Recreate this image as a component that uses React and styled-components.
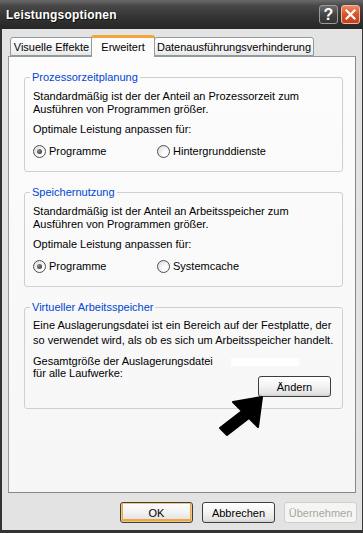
import styled, { createGlobalStyle } from "styled-components";

const GlobalStyle = createGlobalStyle`
  html, body {
    margin: 0;
    padding: 0;
    background: #ffffff;
  }
  body {
    font-family: "Liberation Sans", Arial, sans-serif;
    font-size: 11px;
    color: #000;
  }
`;

const Window = styled.div`
  position: relative;
  width: 363px;
  height: 533px;
  display: flex;
  flex-direction: column;
  overflow: hidden;
`;

const TitleBar = styled.div`
  height: 29px;
  flex: none;
  display: flex;
  align-items: center;
  padding: 0 3px 0 6px;
  gap: 3px;
  background: linear-gradient(#6a6a6a 0%, #474747 20%, #333 60%, #262626 100%);
`;

const Title = styled.div`
  flex: 1;
  color: #fff;
  font-weight: bold;
  font-size: 12px;
  letter-spacing: 0.2px;
  text-shadow: 1px 1px 0 #111;
  margin-top: 1px;
`;

const CaptionButton = styled.div`
  width: 19px;
  height: 19px;
  box-sizing: border-box;
  border: 1px solid ${({ $close }) => ($close ? "#f1b9a6" : "#9a9a9a")};
  border-radius: 3px;
  display: flex;
  align-items: center;
  justify-content: center;
  color: #fff;
  font-weight: bold;
  font-size: 16px;
  background: ${({ $close }) =>
    $close
      ? "linear-gradient(#f08a63, #dc5128 50%, #c93d19)"
      : "linear-gradient(#6c6c6c, #444 50%, #333)"};
`;

const Client = styled.div`
  flex: 1;
  display: flex;
  flex-direction: column;
  background: #e3e3e3;
  border-left: 2px solid #333;
  border-right: 1px solid #3a3a3a;
  border-bottom: 3px solid #333;
  padding: 8px 6px 7px 6px;
`;

const TabStrip = styled.div`
  height: 19px;
  display: flex;
  align-items: flex-end;
  padding-left: 2px;
  position: relative;
  z-index: 1;
`;

const Tab = styled.div`
  box-sizing: border-box;
  height: ${({ $active }) => ($active ? "22px" : "19px")};
  margin-bottom: ${({ $active }) => ($active ? "-1px" : "0")};
  margin-left: ${({ $active }) => ($active ? "-2px" : "0")};
  margin-right: ${({ $active }) => ($active ? "-1px" : "0")};
  width: ${({ $w }) => $w}px;
  border: 1px solid #919b9c;
  border-bottom: ${({ $active }) => ($active ? "none" : "1px solid #919b9c")};
  border-top: ${({ $active }) => ($active ? "3px solid #f1a637" : "1px solid #919b9c")};
  border-radius: 3px 3px 0 0;
  background: ${({ $active }) =>
    $active ? "#fcfcfc" : "linear-gradient(#ffffff, #f3f3f3 70%, #e6e6e6)"};
  display: flex;
  align-items: center;
  justify-content: center;
  white-space: nowrap;
  padding-bottom: ${({ $active }) => ($active ? "2px" : "0")};
  z-index: ${({ $active }) => ($active ? 2 : 1)};
`;

const Panel = styled.div`
  height: 437px;
  box-sizing: border-box;
  border: 1px solid #919b9c;
  border-right-color: #888;
  border-bottom-color: #888;
  background: linear-gradient(#fcfcfc, #f6f6f6);
  padding: 14px 12px 0 15px;
  display: flex;
  flex-direction: column;
  gap: 14px;
`;

const Group = styled.fieldset`
  margin: 0;
  min-width: 0;
  border: 1px solid #d0d0cb;
  border-radius: 3px;
  padding: ${({ $pad }) => $pad || "6px 8px 13px 8px"};
`;

const Legend = styled.legend`
  color: #0046d5;
  line-height: 13px;
  padding: 0 2px;
  margin-left: -3px;
`;

const Line = styled.div`
  line-height: ${({ $lh }) => $lh || 13}px;
  white-space: nowrap;
`;

const Lines = styled.div`
  margin-bottom: ${({ $mb }) => $mb || 0}px;
`;

const RadioRow = styled.div`
  margin-top: 9px;
  display: grid;
  grid-template-columns: 124px auto;
  align-items: center;
`;

const RadioItem = styled.label`
  display: flex;
  align-items: center;
  gap: 3px;
  line-height: 13px;
`;

const RadioCircle = styled.span`
  width: 13px;
  height: 13px;
  box-sizing: border-box;
  border-radius: 50%;
  border: 1px solid #4f4f4f;
  background: radial-gradient(circle at 70% 70%, #ffffff 20%, #dcdcdc 90%);
  display: flex;
  align-items: center;
  justify-content: center;

  &::after {
    content: "";
    width: 5px;
    height: 5px;
    border-radius: 50%;
    background: ${({ $checked }) =>
      $checked ? "radial-gradient(circle at 35% 35%, #8a8a8a, #2a2a2a)" : "transparent"};
  }
`;

const SizeRow = styled.div`
  margin-top: 7px;
  display: flex;
  align-items: flex-start;
`;

const Redacted = styled.div`
  width: 68px;
  height: 8px;
  margin: 3px 0 0 18px;
  background: #ffffff;
`;

const ButtonRight = styled.div`
  display: flex;
  justify-content: flex-end;
  margin-top: -3px;
  padding-right: 3px;
`;

const Button = styled.button`
  width: 73px;
  height: 21px;
  box-sizing: border-box;
  padding: 0;
  font-family: "Liberation Sans", Arial, sans-serif;
  font-size: 11px;
  color: ${({ disabled }) => (disabled ? "#a7a7a0" : "#000")};
  border: 1px solid ${({ disabled }) => (disabled ? "#d0d0c8" : "#3d3d3d")};
  border-radius: 3px;
  background: ${({ disabled }) =>
    disabled ? "#f5f5f3" : "linear-gradient(#ffffff 0%, #f4f4f4 45%, #e4e4e4 85%, #d2d2d2 100%)"};
  box-shadow: ${({ $default }) =>
    $default ? "inset 0 0 0 1px #f5c778, inset 0 -1px 0 2px #e9a64a" : "none"};
`;

const ButtonRow = styled.div`
  margin-top: 9px;
  display: flex;
  justify-content: flex-end;
  gap: 9px;
  margin-right: -1px;
`;

const Arrow = styled.svg`
  position: absolute;
  left: 210px;
  top: 390px;
`;

export default function App() {
  return (
    <Window>
      <GlobalStyle />
      <TitleBar>
        <Title>Leistungsoptionen</Title>
        <CaptionButton>?</CaptionButton>
        <CaptionButton $close>
          <svg width="11" height="11" viewBox="0 0 11 11">
            <path d="M1.5 1.5 L9.5 9.5 M9.5 1.5 L1.5 9.5" stroke="#fff" strokeWidth="2.2" strokeLinecap="square" />
          </svg>
        </CaptionButton>
      </TitleBar>

      <Client>
        <TabStrip>
          <Tab $w={83}>Visuelle Effekte</Tab>
          <Tab $w={64} $active>Erweitert</Tab>
          <Tab $w={160}>Datenausführungsverhinderung</Tab>
        </TabStrip>

        <Panel>
          <Group>
            <Legend>Prozessorzeitplanung</Legend>
            <Lines $mb={7}>
              <Line>Standardmäßig ist der der Anteil an Prozessorzeit zum</Line>
              <Line>Ausführen von Programmen größer.</Line>
            </Lines>
            <Line>Optimale Leistung anpassen für:</Line>
            <RadioRow>
              <RadioItem>
                <RadioCircle $checked />
                Programme
              </RadioItem>
              <RadioItem>
                <RadioCircle />
                Hintergrunddienste
              </RadioItem>
            </RadioRow>
          </Group>

          <Group>
            <Legend>Speichernutzung</Legend>
            <Lines $mb={7}>
              <Line>Standardmäßig ist der Anteil an Arbeitsspeicher zum</Line>
              <Line>Ausführen von Programmen größer.</Line>
            </Lines>
            <Line>Optimale Leistung anpassen für:</Line>
            <RadioRow>
              <RadioItem>
                <RadioCircle $checked />
                Programme
              </RadioItem>
              <RadioItem>
                <RadioCircle />
                Systemcache
              </RadioItem>
            </RadioRow>
          </Group>

          <Group $pad="4px 8px 11px 8px">
            <Legend>Virtueller Arbeitsspeicher</Legend>
            <Lines>
              <Line $lh={15}>Eine Auslagerungsdatei ist ein Bereich auf der Festplatte, der</Line>
              <Line $lh={15}>so verwendet wird, als ob es sich um Arbeitsspeicher handelt.</Line>
            </Lines>
            <SizeRow>
              <Lines>
                <Line $lh={12}>Gesamtgröße der Auslagerungsdatei</Line>
                <Line $lh={12}>für alle Laufwerke:</Line>
              </Lines>
              <Redacted />
            </SizeRow>
            <ButtonRight>
              <Button>Ändern</Button>
            </ButtonRight>
          </Group>
        </Panel>

        <ButtonRow>
          <Button $default>OK</Button>
          <Button>Abbrechen</Button>
          <Button disabled>Übernehmen</Button>
        </ButtonRow>
      </Client>

      <Arrow width="60" height="50" viewBox="0 0 60 50">
        <polygon
          points="52,7 23,12 32,21 10,38 17,45 39,28 48,37"
          fill="#000"
          stroke="#000"
          strokeWidth="2"
          strokeLinejoin="round"
        />
      </Arrow>
    </Window>
  );
}
